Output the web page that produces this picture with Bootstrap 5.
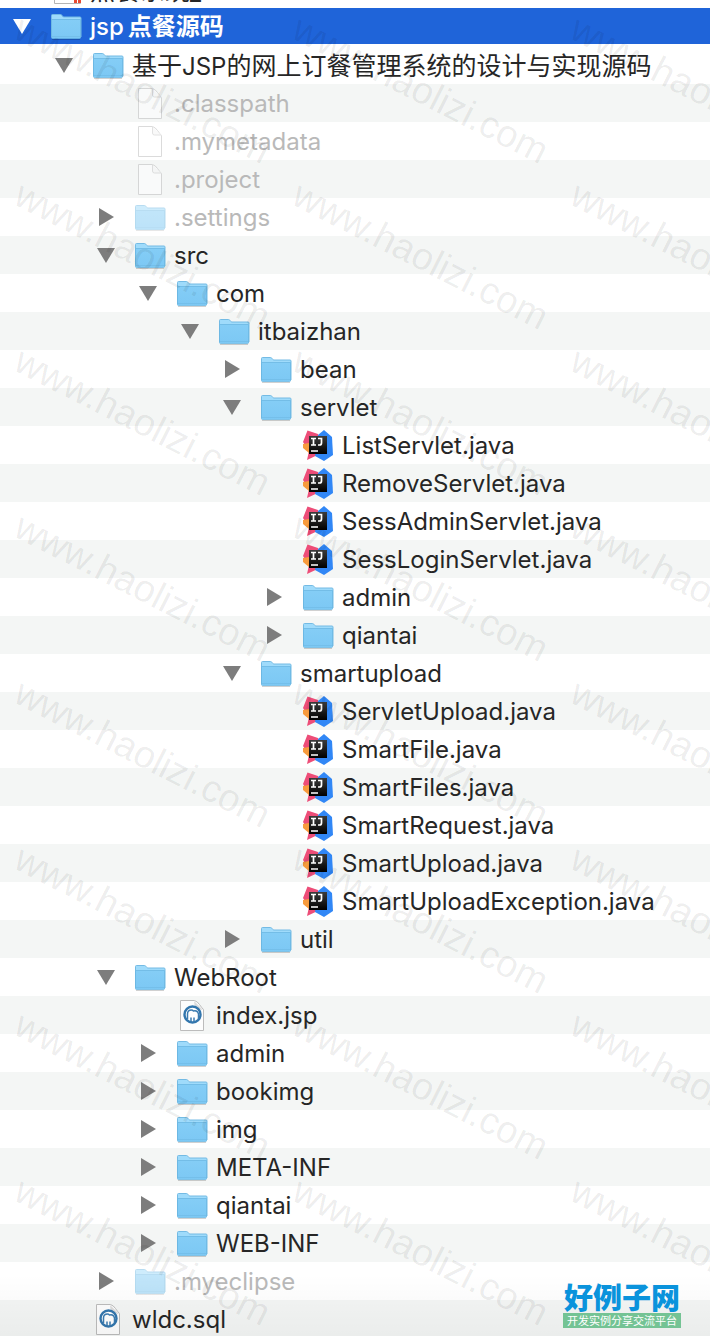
<!DOCTYPE html>
<html lang="zh-CN">
<head>
<meta charset="utf-8">
<meta name="viewport" content="width=device-width, initial-scale=1">
<title>jsp点餐源码</title>
<link href="https://cdn.jsdelivr.net/npm/bootstrap@5.3.0/dist/css/bootstrap.min.css" rel="stylesheet">
<style>
  body { font-family: Inter, "Noto Sans CJK SC", sans-serif; color: #262626; background: #fff; }
  .finder { min-height: 100vh; overflow: hidden; }
  .tree-row { height: 38px; padding-left: calc(12px + 42px * var(--depth)); font-size: 24px; line-height: 36px; white-space: nowrap; }
  .tree-row:nth-child(even) { background: #f4f6f5; }
  .tree-row.picked { background: #1f64d9; border-bottom: 2px solid #fff; color: #fff; font-weight: 500; }
  .tree-row.cut { height: 8px; padding-bottom: 3px; background: #fff; align-items: flex-end !important; overflow: hidden; line-height: 26px; }
  .label-text { padding-top: 2px; }
  .picked .latin { margin-right: 4px; }
  .han { font-size: 25px; }
  .picked .han { font-size: 24px; font-weight: 600; }
  .twisty { width: 20px; height: 20px; margin-right: 16px; padding: 0; border: 0; background: none; color: #7d7d7d; display: flex; flex: none; }
  .picked .twisty { color: #fff; }
  .kind { width: 36px; height: 34px; flex: none; margin-right: 6px; }
  .faded .kind { opacity: .5; }
  .faded .label-text { color: #b9b9b9; }
  .marks { position: absolute; inset: 0; display: grid; grid-template-columns: repeat(3, 278px); grid-auto-rows: 166px; overflow: hidden; pointer-events: none; }
  .marks span { font: 38px/38px "Liberation Sans", sans-serif; color: rgba(0,0,0,.075); transform-origin: 0 100%; transform: rotate(27deg); white-space: nowrap; height: 38px; padding-left: 10px; }
  .shade { position: absolute; inset: auto 0 0 0; height: 64px; background: linear-gradient(transparent, rgba(0,0,0,.04)); pointer-events: none; }
  .site { position: absolute; right: 29px; bottom: 10px; width: 118px; text-align: center; font-family: "Noto Sans CJK SC", sans-serif; }
  .site-name { font-size: 29px; line-height: 34px; font-weight: 900; color: #0a93dc; }
  .site-sub { font-size: 11px; line-height: 15px; color: #fff; background: #74c394; }
</style>
</head>
<body>
<svg class="position-absolute" width="0" height="0" aria-hidden="true" xmlns="http://www.w3.org/2000/svg">
  <defs>
    <linearGradient id="gFolder" x2="0" y2="1"><stop stop-color="#84cdf6"/><stop offset="1" stop-color="#7cc8f4"/></linearGradient>
    <linearGradient id="gTile" x2="0" y2="1"><stop stop-color="#3b3b3b"/><stop offset="1" stop-color="#000"/></linearGradient>
  </defs>
  <symbol id="folder" viewBox="0 0 36 34">
    <path d="M4 30.500h28" stroke="#000" stroke-opacity=".18"/>
    <path d="M3.500 6.500q0-1 1-1h8q1 0 1.500 1t1.800 1.500H32q1 0 1 1V28H3.500z" fill="#9fdbfb" stroke="#74bbe4"/>
    <path d="M3.500 10.500H32.500V28.500q0 1-1 1h-27q-1 0-1-1z" fill="url(#gFolder)" stroke="#67b3df" stroke-opacity=".7"/>
    <path d="M4 27.500h28" stroke="#74bfea"/>
  </symbol>
  <symbol id="page" viewBox="0 0 36 34">
    <path d="M6.500 2.500h14q3 1 5 4 2 3 4 5v21h-23z" fill="#fff" stroke="#b8b8b8"/>
    <path d="M20.500 3v6q0 2 2 2h6.500" fill="#f5f5f5" stroke="#c6c6c6"/>
  </symbol>
  <symbol id="mamp" viewBox="0 0 36 34">
    <path d="M6.500 2.500h14q3 1 5 4 2 3 4 5v21h-23z" fill="#fdfdfd" stroke="#bcbcbc"/>
    <path d="M20 3l1 8 8 1z" fill="#dcdcdc"/>
    <circle cx="18.500" cy="16.500" r="8" fill="#fff" stroke="#3376ad" stroke-width="2.400"/>
    <path d="M13.500 21v-5q0-4 4-4 1 0 2 1 4-1 5 3v5M17 23.500v-4M20 23.500v-4" fill="none" stroke="#3c7cb1" stroke-width="1.500"/>
  </symbol>
  <symbol id="idea" viewBox="0 0 36 34">
    <path d="M7.500 2.500L18 6l6 18-17 8 2-9-6-9z" fill="#ed4d78"/>
    <path d="M3 16l6-1v10l-6-5z" fill="#f79b3d"/>
    <path d="M18 7l6-5 8 7 1 18-9 6-9-5z" fill="#3187f6"/>
    <path d="M9 8h18v18H9z" fill="url(#gTile)"/>
    <path d="M11 10.500h5M13.500 10.500v6.500M11 17h5M18 10.500h3.500v4.500q0 2-2 2H18M11 23h7" stroke="#fff" stroke-width="1.700" fill="none"/>
  </symbol>
  <symbol id="calendar" viewBox="0 0 36 34">
    <path d="M6.500 2.500h26v30h-26z" fill="#fff" stroke="#b5b5b5"/>
    <path d="M26 26h3v6h-3zM30 26h3v6h-3z" fill="#e84a32"/>
  </symbol>
  <symbol id="down" viewBox="0 0 20 20"><path d="M1 3h18l-9 15z" fill="currentColor"/></symbol>
  <symbol id="right" viewBox="0 0 20 20"><path d="M3 1l15 9-15 9z" fill="currentColor"/></symbol>
</svg>
<main class="finder position-relative">
  <div id="tree" role="tree"></div>
  <div class="shade"></div>
  <div class="marks" id="marks" aria-hidden="true"></div>
  <div class="site"><div class="site-name">好例子网</div><div class="site-sub">开发实例分享交流平台</div></div>
</main>
<script src="https://cdn.jsdelivr.net/npm/bootstrap@5.3.0/dist/js/bootstrap.bundle.min.js"></script>
<script>
  // depth, arrow, icon, name, extra class
  const rows = [
    [0, '', 'calendar', '点餐系统_', 'cut'],
    [0, 'down', 'folder', 'jsp点餐源码', 'picked'],
    [1, 'down', 'folder', '基于JSP的网上订餐管理系统的设计与实现源码'],
    [2, '', 'page', '.classpath', 'faded'],
    [2, '', 'page', '.mymetadata', 'faded'],
    [2, '', 'page', '.project', 'faded'],
    [2, 'right', 'folder', '.settings', 'faded'],
    [2, 'down', 'folder', 'src'],
    [3, 'down', 'folder', 'com'],
    [4, 'down', 'folder', 'itbaizhan'],
    [5, 'right', 'folder', 'bean'],
    [5, 'down', 'folder', 'servlet'],
    [6, '', 'idea', 'ListServlet.java'],
    [6, '', 'idea', 'RemoveServlet.java'],
    [6, '', 'idea', 'SessAdminServlet.java'],
    [6, '', 'idea', 'SessLoginServlet.java'],
    [6, 'right', 'folder', 'admin'],
    [6, 'right', 'folder', 'qiantai'],
    [5, 'down', 'folder', 'smartupload'],
    [6, '', 'idea', 'ServletUpload.java'],
    [6, '', 'idea', 'SmartFile.java'],
    [6, '', 'idea', 'SmartFiles.java'],
    [6, '', 'idea', 'SmartRequest.java'],
    [6, '', 'idea', 'SmartUpload.java'],
    [6, '', 'idea', 'SmartUploadException.java'],
    [5, 'right', 'folder', 'util'],
    [2, 'down', 'folder', 'WebRoot'],
    [3, '', 'mamp', 'index.jsp'],
    [3, 'right', 'folder', 'admin'],
    [3, 'right', 'folder', 'bookimg'],
    [3, 'right', 'folder', 'img'],
    [3, 'right', 'folder', 'META-INF'],
    [3, 'right', 'folder', 'qiantai'],
    [3, 'right', 'folder', 'WEB-INF'],
    [2, 'right', 'folder', '.myeclipse', 'faded'],
    [1, '', 'mamp', 'wldc.sql']
  ];
  // Chinese and Latin runs are set at slightly different sizes
  const runs = name => name.replace(/[\u4e00-\u9fff]+|[^\u4e00-\u9fff]+/g,
    run => `<span class="${run > '\u4e00' ? 'han' : 'latin'}">${run}</span>`);
  document.getElementById('tree').innerHTML = rows.map(([depth, arrow, icon, name, extra = '']) => {
    const twisty = arrow
      ? `<button type="button" class="twisty" aria-label="${name}"><svg width="20" height="20"><use href="#${arrow}"/></svg></button>`
      : '<span class="twisty"></span>';
    return `<div class="tree-row d-flex align-items-center ${extra}" role="treeitem" style="--depth:${depth}">${twisty}<svg class="kind"><use href="#${icon}"/></svg><span class="label-text">${runs(name)}</span></div>`;
  }).join('');
  document.getElementById('marks').innerHTML = '<span>www.haolizi.com</span>'.repeat(24);
</script>
</body>
</html>
